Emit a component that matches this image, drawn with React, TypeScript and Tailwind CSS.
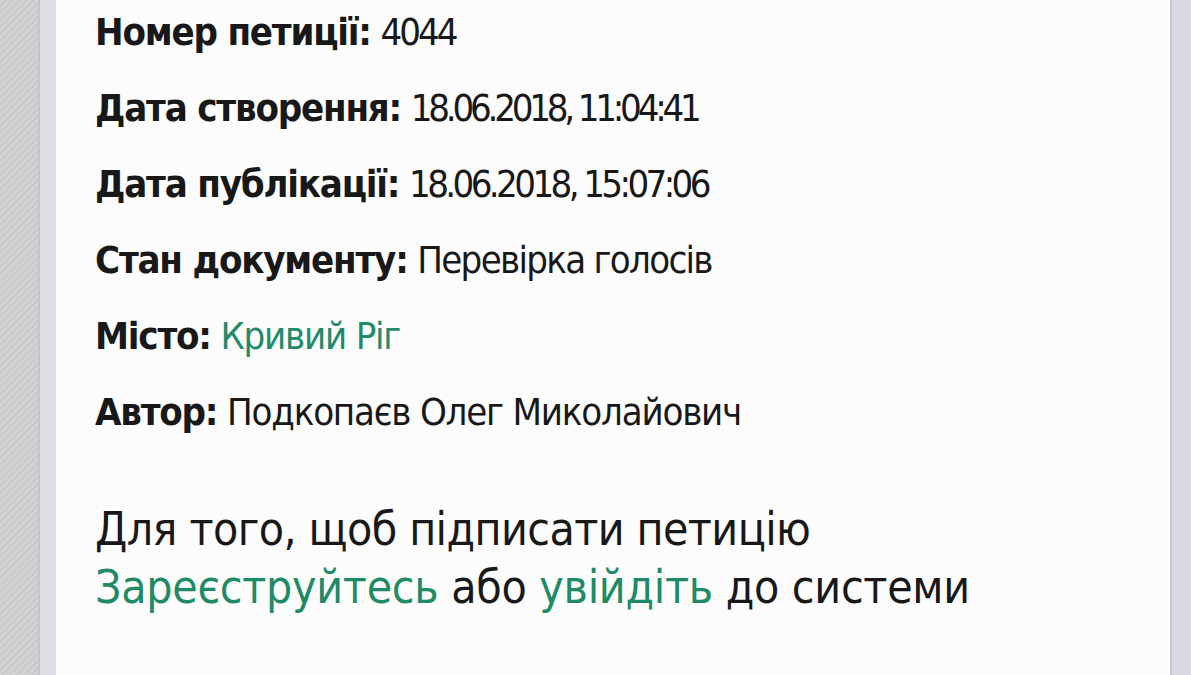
export default function App() {
  const rows: { label: string; value: string; green?: boolean; tight?: string }[] = [
    { label: "Номер петиції:", value: "4044", tight: "tracking-[-3px]" },
    { label: "Дата створення:", value: "18.06.2018, 11:04:41", tight: "tracking-[-4.2px]" },
    { label: "Дата публікації:", value: "18.06.2018, 15:07:06", tight: "tracking-[-3.6px]" },
    { label: "Стан документу:", value: "Перевірка голосів", tight: "tracking-[-1.7px]" },
    { label: "Місто:", value: "Кривий Ріг", green: true },
    { label: "Автор:", value: "Подкопаєв Олег Миколайович" },
  ];

  return (
    <div
      className="flex h-[675px] w-[1191px] overflow-hidden"
      style={{ fontFamily: '"Liberation Sans Narrow", "DejaVu Sans Condensed", "Noto Sans", sans-serif' }}
    >
      {/* фон зліва */}
      <div className="w-[38px] bg-[repeating-linear-gradient(135deg,#d2d2d4_0px,#d2d2d4_3px,#c9c9cb_3px,#c9c9cb_5px)]" />
      <div className="w-[18px] border-l-2 border-[#c4c4cc] bg-[#dedee4]" />

      {/* картка петиції */}
      <div className="flex-1 bg-[#fcfcfc] pl-[39px] pt-[10px]">
        <div className="flex flex-col">
          {rows.map((r) => (
            <div
              key={r.label}
              className="h-[76px] whitespace-nowrap text-[38px] leading-[44px] tracking-[-1.2px] text-[#181818]"
            >
              <span className="font-bold">{r.label}</span>{" "}
              <span className={`${r.green ? "text-[#228a68]" : ""} ${r.tight ?? ""}`}>{r.value}</span>
            </div>
          ))}
        </div>
        <div className="mt-[34px] whitespace-nowrap text-[46px] leading-[58px] tracking-[-0.3px] text-[#181818]">
          <div className="tracking-[-0.6px]">Для того, щоб підписати петицію</div>
          <div>
            <span className="text-[#1f8b66]">Зареєструйтесь</span> або{" "}
            <span className="text-[#1f8b66]">увійдіть</span> до системи
          </div>
        </div>
      </div>

      {/* рамка справа */}
      <div className="w-[21px] border-l-2 border-[#c6c6ce] bg-[#d8d8e2]" />
    </div>
  );
}
